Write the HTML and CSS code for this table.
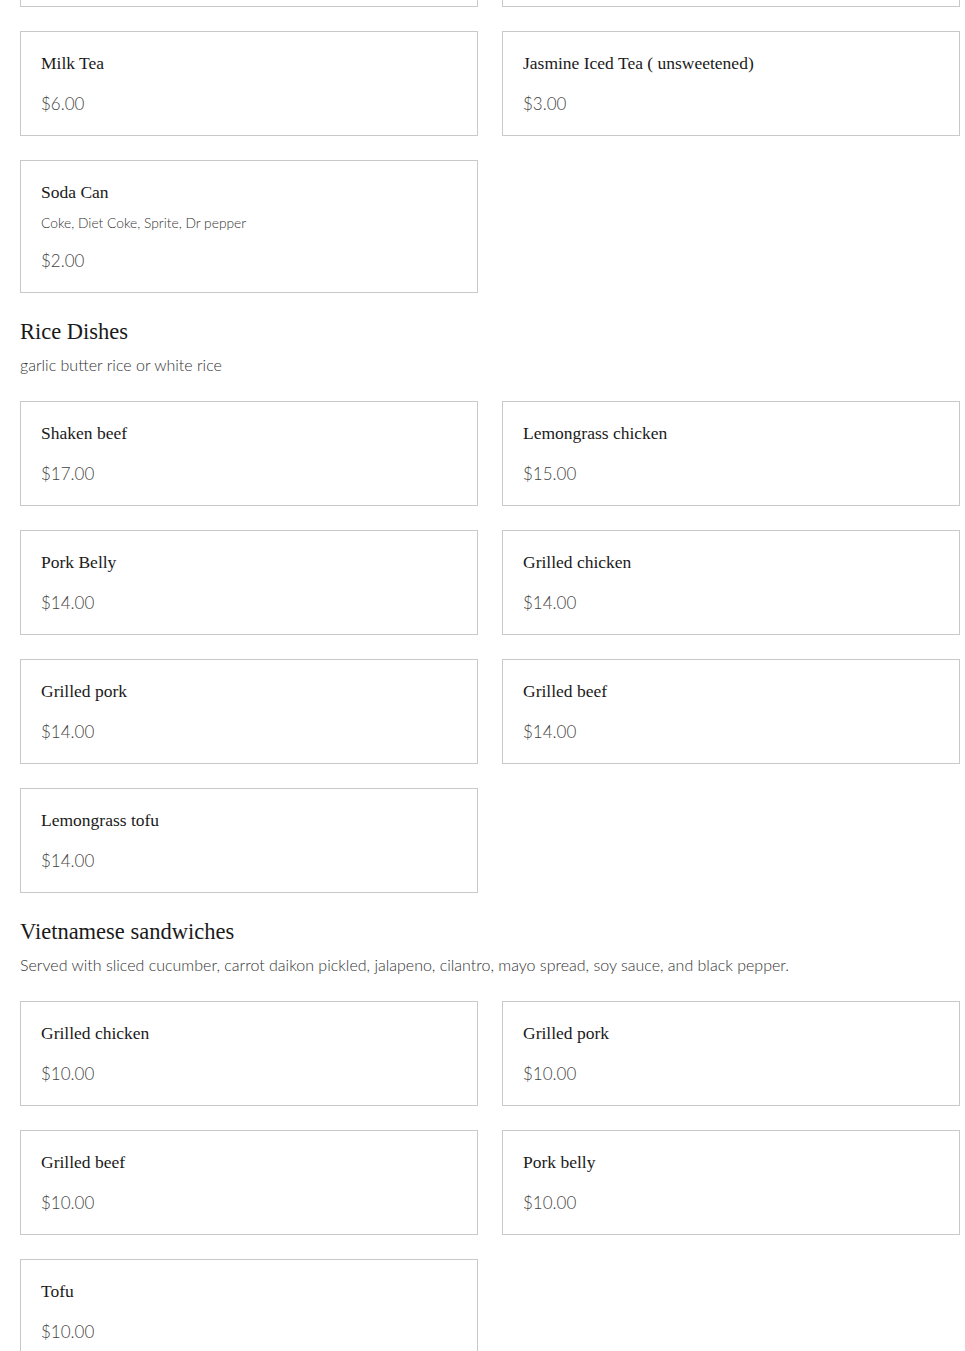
FILE: index.html
```html
<!DOCTYPE html>
<html lang="en">
<head>
<meta charset="utf-8">
<title>Menu</title>
<link rel="stylesheet" href="styles.css">
</head>
<body>
<main class="menu">
  <section class="section">
    <div class="grid">
      <div class="card">
        <h3 class="item-name">Vietnamese Iced Coffee</h3>
        <p class="item-price">$5.00</p>
      </div>
      <div class="card">
        <h3 class="item-name">Thai Tea</h3>
        <p class="item-price">$5.00</p>
      </div>
      <div class="card">
        <h3 class="item-name">Milk Tea</h3>
        <p class="item-price">$6.00</p>
      </div>
      <div class="card">
        <h3 class="item-name">Jasmine Iced Tea ( unsweetened)</h3>
        <p class="item-price">$3.00</p>
      </div>
      <div class="card">
        <h3 class="item-name">Soda Can</h3>
        <p class="item-desc">Coke, Diet Coke, Sprite, Dr pepper</p>
        <p class="item-price">$2.00</p>
      </div>
    </div>
  </section>

  <section class="section">
    <header class="section-head">
      <h2 class="section-title">Rice Dishes</h2>
      <p class="section-desc">garlic butter rice or white rice</p>
    </header>
    <div class="grid">
      <div class="card"><h3 class="item-name">Shaken beef</h3><p class="item-price">$17.00</p></div>
      <div class="card"><h3 class="item-name">Lemongrass chicken</h3><p class="item-price">$15.00</p></div>
      <div class="card"><h3 class="item-name">Pork Belly</h3><p class="item-price">$14.00</p></div>
      <div class="card"><h3 class="item-name">Grilled chicken</h3><p class="item-price">$14.00</p></div>
      <div class="card"><h3 class="item-name">Grilled pork</h3><p class="item-price">$14.00</p></div>
      <div class="card"><h3 class="item-name">Grilled beef</h3><p class="item-price">$14.00</p></div>
      <div class="card"><h3 class="item-name">Lemongrass tofu</h3><p class="item-price">$14.00</p></div>
    </div>
  </section>

  <section class="section">
    <header class="section-head">
      <h2 class="section-title">Vietnamese sandwiches</h2>
      <p class="section-desc">Served with sliced cucumber, carrot daikon pickled, jalapeno, cilantro, mayo spread, soy sauce, and black pepper.</p>
    </header>
    <div class="grid">
      <div class="card"><h3 class="item-name">Grilled chicken</h3><p class="item-price">$10.00</p></div>
      <div class="card"><h3 class="item-name">Grilled pork</h3><p class="item-price">$10.00</p></div>
      <div class="card"><h3 class="item-name">Grilled beef</h3><p class="item-price">$10.00</p></div>
      <div class="card"><h3 class="item-name">Pork belly</h3><p class="item-price">$10.00</p></div>
      <div class="card"><h3 class="item-name">Tofu</h3><p class="item-price">$10.00</p></div>
    </div>
  </section>
</main>
</body>
</html>
```

FILE: styles.css
```css
html, body {
  margin: 0;
  padding: 0;
  background: #ffffff;
}

body {
  font-family: "Lato", "Liberation Sans", sans-serif;
  color: #333333;
}

.menu {
  width: 940px;
  margin: -98px 0 0 20px;
  display: flex;
  flex-direction: column;
  gap: 24px;
  padding-bottom: 40px;
}

.section {
  display: flex;
  flex-direction: column;
}

.section-head {
  display: flex;
  flex-direction: column;
  gap: 6px;
  margin-bottom: 24px;
}

.section-title {
  margin: 0;
  font-family: "Liberation Serif", "DejaVu Serif", serif;
  font-weight: 400;
  font-size: 22.5px;
  line-height: 30px;
  color: #1a1a1a;
}

.section-desc {
  margin: 0;
  font-size: 16px;
  line-height: 24px;
  font-weight: 300;
  color: #333333;
}

.grid {
  display: grid;
  grid-template-columns: 1fr 1fr;
  gap: 24px;
  align-items: start;
}

.card {
  border: 1px solid #c9c9c9;
  padding: 19px 20px 19px 20px;
  display: flex;
  flex-direction: column;
}

.item-name {
  margin: 0;
  font-family: "Liberation Serif", "DejaVu Serif", serif;
  font-weight: 400;
  font-size: 17.5px;
  line-height: 24px;
  color: #1a1a1a;
}

.item-desc {
  margin: 8px 0 0 0;
  font-size: 13.8px;
  line-height: 22px;
  font-weight: 300;
  color: #333333;
}

.item-price {
  margin: 17px 0 0 0;
  font-size: 17px;
  line-height: 24px;
  font-weight: 300;
  color: #444444;
}

.item-desc + .item-price {
  margin-top: 15px;
}
```
